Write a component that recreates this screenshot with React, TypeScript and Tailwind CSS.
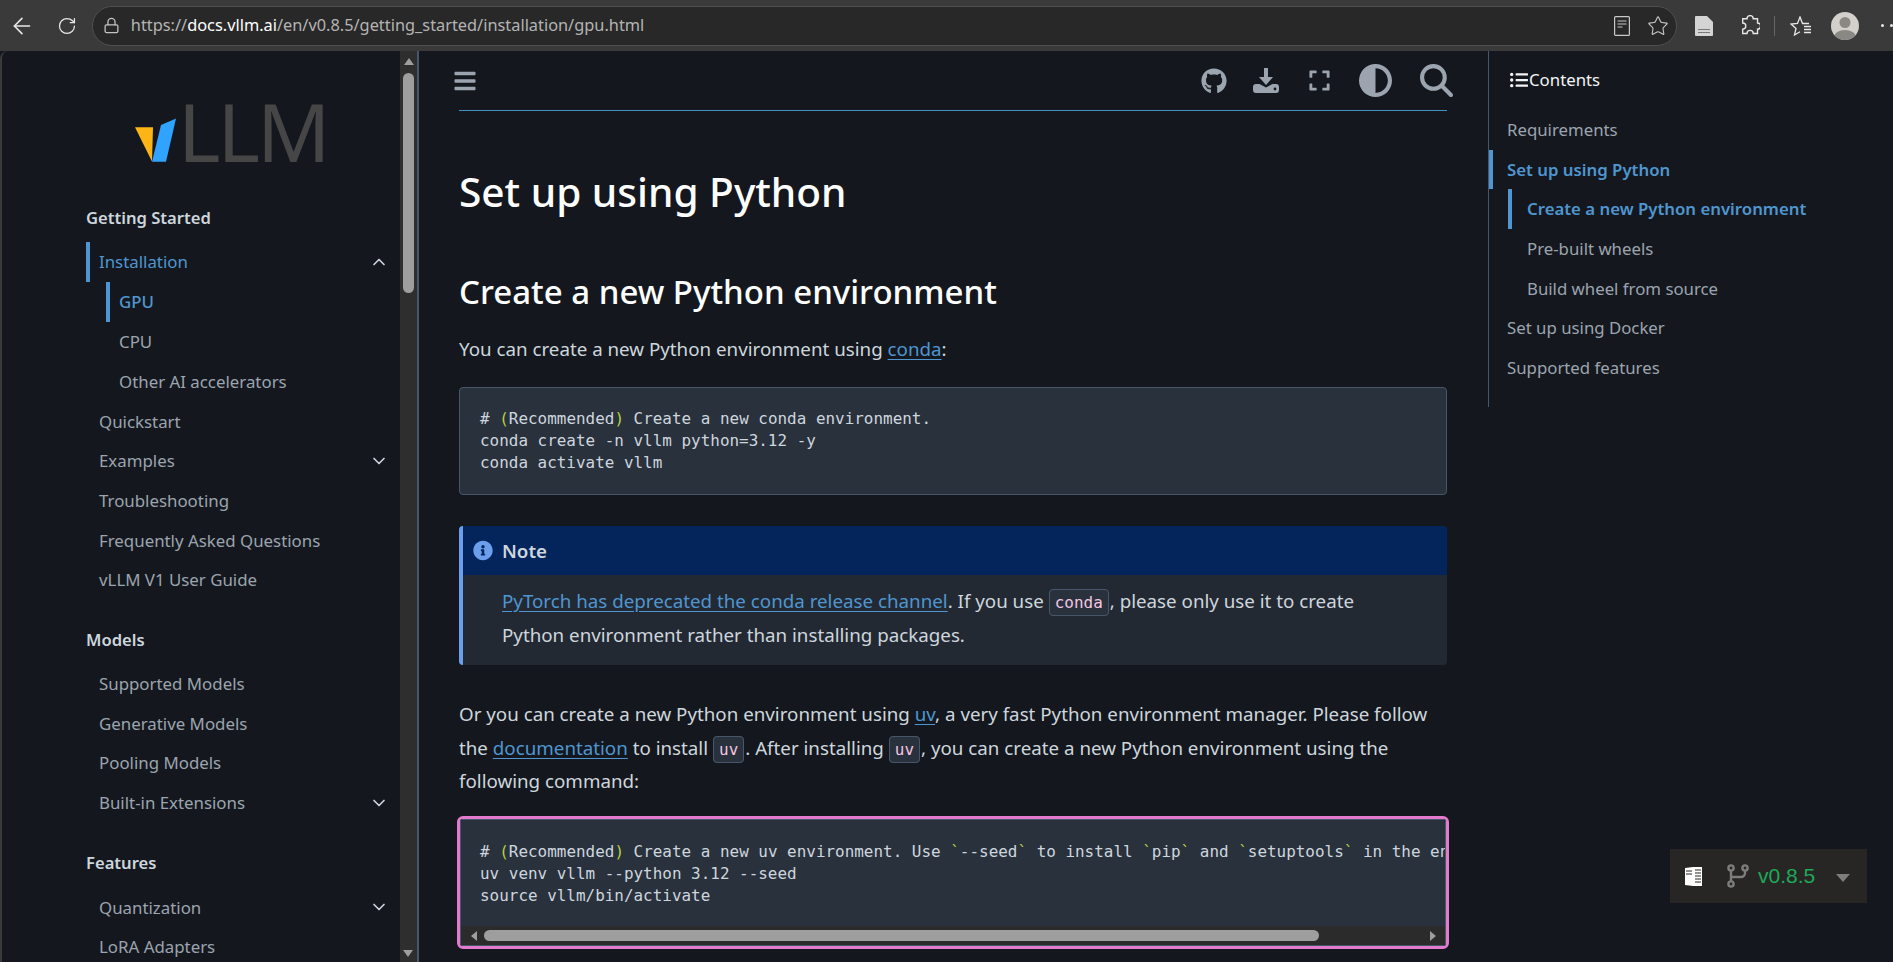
import { ArrowLeft, ChevronDown, ChevronUp, Lock, RotateCw, Star } from "lucide-react";
import { FaBars, FaExpand, FaGithub, FaInfoCircle, FaListUl } from "react-icons/fa";
import { FaCircleHalfStroke, FaMagnifyingGlass } from "react-icons/fa6";

const sans = "font-['Noto_Sans',sans-serif]";
const mono = "font-['DejaVu_Sans_Mono',monospace]";

function NavRow({ label, chevron }: { label: string; chevron?: "up" | "down" }) {
  return (
    <div className="flex h-[39.7px] items-center justify-between pl-[13px] pr-[11px] text-[#9ca4af]">
      <span>{label}</span>
      {chevron === "down" && <ChevronDown size={20} strokeWidth={2} className="text-[#ced6dd]" />}
      {chevron === "up" && <ChevronUp size={20} strokeWidth={2} className="text-[#ced6dd]" />}
    </div>
  );
}

function NavHeading({ label, className }: { label: string; className?: string }) {
  return <div className={`flex h-10 items-center text-[16.6px] font-semibold text-[#ced6dd] ${className ?? ""}`}>{label}</div>;
}

function Sidebar() {
  return (
    <aside className="flex w-[419px] shrink-0 overflow-hidden rounded-tl-lg border-l-2 border-[#3a3a3a]">
      <div className="w-[398px] pl-[84px] text-[16.85px]">
        <div className="mt-[44px] flex h-[103px] items-start pl-[48px]">
          <svg width="44" height="46" viewBox="134 118 44 46" className="mt-[23px] shrink-0">
            <polygon points="135,127.3 153,127.3 152,161.5" fill="#fdb515" />
            <polygon points="152,161.8 161,125 176,118.5 166,161.8" fill="#30a2ff" />
          </svg>
          <span className={`${sans} -mt-[6px] text-[81px] leading-[84px] tracking-[-3px] text-[#464646]`}>LLM</span>
        </div>
        <NavHeading label="Getting Started" />
        <div className="mt-1">
          <div className="flex h-10 items-center justify-between border-l-4 border-[#4f96d0] pl-[9px] pr-[11px] text-[#4f96d0]">
            <span>Installation</span>
            <ChevronUp size={20} strokeWidth={2} className="text-[#ced6dd]" />
          </div>
          <div className="ml-[20px] flex h-10 items-center border-l-4 border-[#4f96d0] pl-[9px] font-medium text-[#4f96d0]">GPU</div>
          <div className="flex h-[39.7px] items-center pl-[33px] text-[#9ca4af]">CPU</div>
          <div className="flex h-[39.7px] items-center pl-[33px] text-[#9ca4af]">Other AI accelerators</div>
          <NavRow label="Quickstart" />
          <NavRow label="Examples" chevron="down" />
          <NavRow label="Troubleshooting" />
          <NavRow label="Frequently Asked Questions" />
          <NavRow label="vLLM V1 User Guide" />
        </div>
        <NavHeading label="Models" className="mt-[21px]" />
        <div className="mt-[3px]">
          <NavRow label="Supported Models" />
          <NavRow label="Generative Models" />
          <NavRow label="Pooling Models" />
          <NavRow label="Built-in Extensions" chevron="down" />
        </div>
        <NavHeading label="Features" className="mt-[21px]" />
        <div className="mt-[4px]">
          <NavRow label="Quantization" chevron="down" />
          <NavRow label="LoRA Adapters" />
        </div>
      </div>
      <div className="relative w-[17px] shrink-0 bg-[#2e2e2e]">
        <div className="mx-auto mt-[7px] h-0 w-0 border-x-[5px] border-b-[7px] border-x-transparent border-b-[#9e9e9e]" />
        <div className="mx-auto mt-[8px] h-[220px] w-[11px] rounded-full bg-[#9e9e9e]" />
        <div className="absolute bottom-[5px] left-[3px] h-0 w-0 border-x-[5px] border-t-[7px] border-x-transparent border-t-[#9e9e9e]" />
      </div>
      <div className="w-[2px] shrink-0 bg-[#48566b]" />
    </aside>
  );
}

function DownloadIcon() {
  return (
    <svg width="26" height="26" viewBox="0 0 26 26" fill="currentColor" className="ml-[26px]">
      <path d="M11 0h4v9h5l-7 8-7-8h5z" />
      <path d="M3 16h3.500l6.500 3.500 6.500-3.500H23a3 3 0 0 1 3 3v3a3 3 0 0 1-3 3H3a3 3 0 0 1-3-3v-3a3 3 0 0 1 3-3z" />
      <circle cx="22" cy="21" r="1.400" fill="#14181e" />
    </svg>
  );
}

function Toolbar() {
  return (
    <div className="flex h-[60px] items-center justify-between border-b border-[#4591c4]">
      <FaBars size={24} className="-ml-[6px] text-[#9ca4af]" />
      <div className="-mr-[6px] flex items-center text-[#9ca4af]">
        <FaGithub size={26} />
        <DownloadIcon />
        <FaExpand size={23} className="ml-[29px]" />
        <FaCircleHalfStroke size={33} className="ml-[28px]" />
        <FaMagnifyingGlass size={33} className="ml-[28px]" />
      </div>
    </div>
  );
}

function InlineCode({ children }: { children: string }) {
  return (
    <code className={`${mono} ml-[5px] mr-px rounded border border-[#48566b] bg-[#29313d] px-[5px] py-[3px] text-[15.95px] leading-none text-[#f3c7e1]`}>
      {children}
    </code>
  );
}

function Link({ children }: { children: string }) {
  return <a className="text-[#4f96d0] underline underline-offset-[3px]">{children}</a>;
}

const accent = "text-[#b5d33d]";

function Content() {
  return (
    <main className="min-w-0 flex-1 pl-[40px] pr-[41px]">
      <Toolbar />
      <h1 className="mt-[57px] text-[40.6px] font-medium leading-[48px] text-white">Set up using Python</h1>
      <h2 className="mt-[56px] text-[33px] font-medium leading-10 text-white">Create a new Python environment</h2>
      <p className="mt-[22px] leading-[30px]">
        You can create a new Python environment using <Link>conda</Link>:
      </p>
      <pre className={`${mono} mt-[23px] rounded border border-[#48566b] bg-[#29313d] px-[20px] py-[20px] text-[15.95px] leading-[22px] text-[#ced6dd]`}>
        # <span className={accent}>(</span>Recommended<span className={accent}>)</span> Create a new conda environment.{"\n"}
        conda create -n vllm python=3.12 -y{"\n"}
        conda activate vllm
      </pre>
      <div className="mt-[31px] overflow-hidden rounded border-l-4 border-[#6c9eee] bg-[#232933]">
        <div className="flex h-[49px] items-center bg-[#03255c] pl-[10px] font-semibold text-[#ced6dd]">
          <span className="flex h-5 w-5 items-center justify-center">
            <FaInfoCircle size={21} className="text-[#6c9eee]" />
          </span>
          <span className="ml-[9px] pt-[2px]">Note</span>
        </div>
        <div className="pb-[13px] pl-[39px] pr-4 pt-[9px] leading-[34px]">
          <Link>PyTorch has deprecated the conda release channel</Link>. If you use<InlineCode>conda</InlineCode>, please only use it to create
          <br />
          Python environment rather than installing packages.
        </div>
      </div>
      <p className="mt-[32px] leading-[33.7px]">
        Or you can create a new Python environment using <Link>uv</Link>, a very fast Python environment manager. Please follow
        <br />
        the <Link>documentation</Link> to install<InlineCode>uv</InlineCode>. After installing<InlineCode>uv</InlineCode>, you can create a new Python environment using the
        <br />
        following command:
      </p>
      <div className="-mx-[2px] mt-[18px] overflow-hidden rounded-md border-[3px] border-[#e27bce]">
        <div className="border border-[#48566b] bg-[#29313d]">
          <pre className={`${mono} overflow-hidden pb-[19px] pl-[19px] pt-[21px] text-[15.95px] leading-[22px] text-[#ced6dd]`}>
            # <span className={accent}>(</span>Recommended<span className={accent}>)</span> Create a new uv environment. Use <span className={accent}>`</span>--seed<span className={accent}>`</span> to install <span className={accent}>`</span>pip<span className={accent}>`</span> and <span className={accent}>`</span>setuptools<span className={accent}>`</span> in the environment.{"\n"}
            uv venv vllm --python 3.12 --seed{"\n"}
            source vllm/bin/activate
          </pre>
          <div className="flex h-[19px] items-center bg-[#2b2b2b] pl-[10px]">
            <div className="h-0 w-0 border-y-[5px] border-r-[6px] border-y-transparent border-r-[#9e9e9e]" />
            <div className="ml-[7px] h-[11px] w-[835px] rounded-full bg-[#9e9e9e]" />
            <div className="ml-[111px] h-0 w-0 border-y-[5px] border-l-[6px] border-y-transparent border-l-[#9e9e9e]" />
          </div>
        </div>
      </div>
    </main>
  );
}

function TocRow({ label, active, sub }: { label: string; active?: boolean; sub?: boolean }) {
  return (
    <div
      className={`flex h-[39.6px] items-center border-l-4 ${sub ? "ml-[19px] pl-[15px]" : "pl-[14px]"} ${
        active ? "border-[#4f96d0] font-semibold text-[#4f96d0]" : "border-transparent text-[#9ca4af]"
      }`}
    >
      {label}
    </div>
  );
}

function Toc() {
  return (
    <nav className="h-[356px] w-[405px] shrink-0 border-l border-[#48566b] text-[16.8px]">
      <div className="mb-px flex h-[58px] items-center gap-[1px] pl-[21px] text-[#f3f4f5]">
        <FaListUl size={18} />
        <span>Contents</span>
      </div>
      <div>
        <TocRow label="Requirements" />
        <TocRow label="Set up using Python" active />
        <TocRow label="Create a new Python environment" active sub />
        <TocRow label="Pre-built wheels" sub />
        <TocRow label="Build wheel from source" sub />
        <TocRow label="Set up using Docker" />
        <TocRow label="Supported features" />
      </div>
    </nav>
  );
}

function BrowserBar() {
  return (
    <header className="flex h-[51px] shrink-0 items-center bg-[#3a3a3a] pl-[9px] text-[#e8e8e8]">
      <ArrowLeft size={26} strokeWidth={1.5} />
      <RotateCw size={20} strokeWidth={1.5} className="ml-[22px]" />
      <div className="ml-[15px] flex h-[40px] w-[1591px] items-center rounded-full border border-[#4f4f4f] bg-[#282828] pl-[10px] pr-[7px]">
        <Lock size={17} strokeWidth={1.8} className="text-[#c4c4c4]" />
        <span className="ml-[11px] text-[16.35px] text-[#b4b4b4]">
          https://<span className="text-white">docs.vllm.ai</span>/en/v0.8.5/getting_started/installation/gpu.html
        </span>
        <div className="ml-auto flex items-center gap-[17px] text-[#c8c8c8]">
          <svg width="16" height="20" viewBox="0 0 16 20" fill="none" stroke="currentColor" strokeWidth="1.2">
            <rect x="0.6" y="0.6" width="14.8" height="18.8" rx="1" />
            <path d="M3.500 5h9M3.500 8h9M3.500 11h5" />
          </svg>
          <Star size={22} strokeWidth={1.2} />
        </div>
      </div>
      <svg width="18" height="20" viewBox="0 0 18 20" className="ml-[18px] shrink-0">
        <path d="M1 0h11l6 6v13a1 1 0 0 1-1 1H1a1 1 0 0 1-1-1V1a1 1 0 0 1 1-1z" fill="#d4d4d4" />
        <path d="M3 13h12v1H3zM3 16h12v1H3z" fill="#777" />
      </svg>
      <svg width="21" height="21" viewBox="1 1 17 17" fill="none" stroke="currentColor" strokeWidth="1.1" className="ml-[26px] shrink-0">
        <path d="M4 4h3.500a2.500 2.500 0 0 1 5 0H16v3.500a2.500 2.500 0 0 1 0 5V16h-3.500a2.500 2.500 0 0 0-5 0H4v-3.500a2.500 2.500 0 0 0 0-5z" />
      </svg>
      <div className="ml-[14px] h-[20px] w-px bg-[#666]" />
      <svg width="22" height="20" viewBox="0 0 22 20" fill="none" stroke="currentColor" strokeWidth="1.3" className="ml-[15px] shrink-0">
        <path d="M19 7.500h-6.500L10 1 7.500 7.500 1 8l5 4.500L4.500 19 10 15.800" />
        <path d="M14 10.500h7M14 13.500h7M14 16.500h7" />
      </svg>
      <div className="ml-[19px] h-[28px] w-[28px] shrink-0 overflow-hidden rounded-full bg-[#d3d0cb]">
        <svg width="28" height="28" viewBox="0 0 28 28">
          <circle cx="14" cy="10.500" r="5.500" fill="#8a8883" />
          <ellipse cx="14" cy="25" rx="11" ry="7" fill="#8a8883" />
        </svg>
      </div>
      <div className="ml-[22px] flex gap-[6px]">
        <span className="h-[3px] w-[3px] rounded-full bg-[#e8e8e8]" />
        <span className="h-[3px] w-[3px] rounded-full bg-[#e8e8e8]" />
      </div>
    </header>
  );
}

function VersionBadge() {
  return (
    <div className="absolute bottom-[59px] right-[26px] flex h-[54px] w-[197px] items-center bg-[#272625] pl-[15px] font-['Liberation_Sans',sans-serif]">
      <svg width="17" height="21" viewBox="0 0 17 21">
        <path d="M0 2l8-1v19l-8-1z" fill="#fff" />
        <path d="M8 1h9v19H8z" fill="#fff" />
        <path d="M1 5h6M1 8h6M10 4h6M10 7h6M10 10h6M10 13h6M10 16h6" stroke="#272625" strokeWidth="1" />
      </svg>
      <svg width="22" height="24" viewBox="0 0 22 24" fill="none" stroke="#7d7d7d" strokeWidth="2.400" className="ml-[25px]">
        <circle cx="4" cy="4" r="2.600" />
        <circle cx="18" cy="4" r="2.600" />
        <circle cx="4" cy="20" r="2.600" />
        <path d="M4 7v10M18 7v2a4 4 0 0 1-4 4H4" />
      </svg>
      <span className="ml-[9px] text-[21px] text-[#1fa858]">v0.8.5</span>
      <div className="ml-[21px] mt-[3px] h-0 w-0 border-x-[7px] border-t-[8px] border-x-transparent border-t-[#7d7d7d]" />
    </div>
  );
}

export default function App() {
  return (
    <div className={`${sans} relative flex h-[962px] w-[1893px] flex-col overflow-hidden bg-[#14181e] text-[18.75px] text-[#ced6dd]`}>
      <BrowserBar />
      <div className="flex min-h-0 flex-1">
        <Sidebar />
        <Content />
        <Toc />
      </div>
      <VersionBadge />
    </div>
  );
}
